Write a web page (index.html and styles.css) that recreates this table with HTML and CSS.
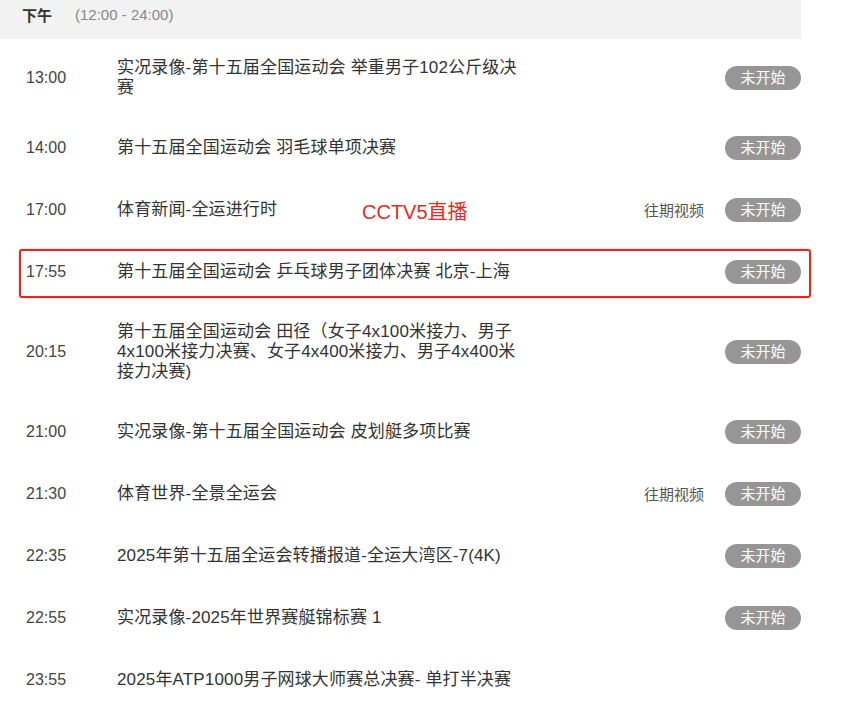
FILE: index.html
```html
<!DOCTYPE html>
<html lang="zh-CN">
<head>
    <meta charset="UTF-8">
    <meta name="viewport" content="width=device-width, initial-scale=1.0">
    <title>节目单</title>
    <link rel="stylesheet" href="styles.css">
</head>
<body>
    <div class="schedule">
        <div class="period">
            <span class="period-name">下午</span>
            <span class="period-range">(12:00 - 24:00)</span>
        </div>

        <ul class="programs">
            <li class="program">
                <span class="time">13:00</span>
                <span class="title">实况录像-第十五届全国运动会 举重男子102公斤级决赛</span>
                <span class="actions"><span class="status">未开始</span></span>
            </li>
            <li class="program">
                <span class="time">14:00</span>
                <span class="title">第十五届全国运动会 羽毛球单项决赛</span>
                <span class="actions"><span class="status">未开始</span></span>
            </li>
            <li class="program">
                <span class="time">17:00</span>
                <span class="title">体育新闻-全运进行时</span>
                <span class="actions"><a class="replay" href="#">往期视频</a><span class="status">未开始</span></span>
                <span class="note">CCTV5直播</span>
            </li>
            <li class="program marked">
                <span class="time">17:55</span>
                <span class="title">第十五届全国运动会 乒乓球男子团体决赛 北京-上海</span>
                <span class="actions"><span class="status">未开始</span></span>
            </li>
            <li class="program">
                <span class="time">20:15</span>
                <span class="title">第十五届全国运动会 田径（女子4x100米接力、男子4x100米接力决赛、女子4x400米接力、男子4x400米接力决赛)</span>
                <span class="actions"><span class="status">未开始</span></span>
            </li>
            <li class="program">
                <span class="time">21:00</span>
                <span class="title">实况录像-第十五届全国运动会 皮划艇多项比赛</span>
                <span class="actions"><span class="status">未开始</span></span>
            </li>
            <li class="program">
                <span class="time">21:30</span>
                <span class="title">体育世界-全景全运会</span>
                <span class="actions"><a class="replay" href="#">往期视频</a><span class="status">未开始</span></span>
            </li>
            <li class="program">
                <span class="time">22:35</span>
                <span class="title">2025年第十五届全运会转播报道-全运大湾区-7(4K)</span>
                <span class="actions"><span class="status">未开始</span></span>
            </li>
            <li class="program">
                <span class="time">22:55</span>
                <span class="title">实况录像-2025年世界赛艇锦标赛 1</span>
                <span class="actions"><span class="status">未开始</span></span>
            </li>
            <li class="program">
                <span class="time">23:55</span>
                <span class="title">2025年ATP1000男子网球大师赛总决赛- 单打半决赛</span>
                <span class="actions"></span>
            </li>
        </ul>
    </div>
</body>
</html>
```

FILE: styles.css
```css
body {
    margin: 0;
    background: #fff;
    font-family: "Liberation Sans", "Noto Sans CJK SC", sans-serif;
    color: #333;
}
.schedule {
    width: 801px;
}
.period {
    display: flex;
    align-items: center;
    height: 39px;
    padding: 0 0 11px 22px;
    box-sizing: border-box;
    background: #f2f2f2;
    font-size: 15px;
}
.period-name {
    font-weight: bold;
    color: #333;
}
.period-range {
    margin-left: 23px;
    color: #888;
}
.programs {
    list-style: none;
    margin: 0;
    padding: 0;
}
.program {
    position: relative;
    display: flex;
    align-items: center;
    min-height: 62px;
    padding: 19px 0;
    box-sizing: border-box;
}
.time {
    width: 91px;
    padding-left: 26px;
    font-size: 16px;
    color: #444;
}
.title {
    width: 410px;
    font-size: 17px;
    line-height: 20px;
    letter-spacing: 0.15px;
    color: #333;
}
.actions {
    margin-left: auto;
    display: flex;
    align-items: center;
}
.replay {
    margin-right: 21px;
    margin-top: -2px;
    font-size: 15px;
    color: #555;
    text-decoration: none;
}
.status {
    width: 76px;
    height: 24px;
    line-height: 24px;
    border-radius: 12px;
    background: #969696;
    color: #fff;
    font-size: 15px;
    text-align: center;
}
.note {
    position: absolute;
    left: 362px;
    top: 50%;
    transform: translateY(-50%);
    font-size: 20px;
    color: #e52a1e;
}
.marked::after {
    content: "";
    position: absolute;
    left: 19px;
    right: -10px;
    top: 8px;
    bottom: 5px;
    border: 2px solid #e8261c;
    border-radius: 3px;
    box-shadow: 0 0 2px rgba(232, 38, 28, 0.4);
}
```
